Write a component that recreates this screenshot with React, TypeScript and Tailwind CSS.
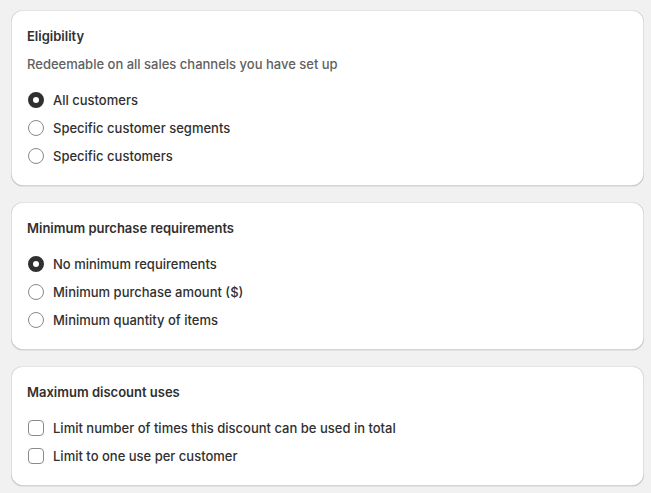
import React from "react";

function Radio({ checked, label }: { checked?: boolean; label: string }) {
  return (
    <div className="flex h-5 items-center gap-[9px]">
      <span
        className={
          checked
            ? "ml-px box-border h-4 w-4 rounded-full border-[5px] border-[#303030] bg-white"
            : "ml-px box-border h-4 w-4 rounded-full border border-[#8a8a8a] bg-white"
        }
      />
      <span className="text-[13px] font-[450] leading-5 text-[#303030]">{label}</span>
    </div>
  );
}

function Check({ label }: { label: string }) {
  return (
    <div className="flex h-5 items-center gap-[9px]">
      <span className="ml-px box-border h-4 w-4 rounded-[4px] border border-[#8a8a8a] bg-white" />
      <span className="text-[13px] font-[450] leading-5 text-[#303030]">{label}</span>
    </div>
  );
}

function Card({ children }: { children: React.ReactNode }) {
  return (
    <div className="rounded-xl bg-white px-4 pb-5 pt-4 shadow-[0_1px_0_0_rgba(26,26,26,0.07),0_1px_0_0_rgba(204,204,204,0.5)_inset,0_-1px_0_0_rgba(0,0,0,0.17)_inset,-1px_0_0_0_rgba(0,0,0,0.13)_inset,1px_0_0_0_rgba(0,0,0,0.13)_inset]">
      {children}
    </div>
  );
}

export default function App() {
  return (
    <div
      className="min-h-[493px] bg-[#f1f1f1] pb-2 pl-[11px] pr-[7px] pt-[10px]"
      style={{ fontFamily: "Inter, 'Noto Sans', sans-serif" }}
    >
      <div className="flex flex-col gap-4">
        <Card>
          <h2 className="text-[13px] font-semibold leading-5 text-[#303030]">Eligibility</h2>
          <p className="mt-2 text-[13px] font-[450] leading-5 text-[#616161]">
            Redeemable on all sales channels you have set up
          </p>
          <div className="mt-4 flex flex-col gap-2">
            <Radio checked label="All customers" />
            <Radio label="Specific customer segments" />
            <Radio label="Specific customers" />
          </div>
        </Card>
        <Card>
          <h2 className="text-[13px] font-semibold leading-5 text-[#303030]">
            Minimum purchase requirements
          </h2>
          <div className="mt-4 flex flex-col gap-2">
            <Radio checked label="No minimum requirements" />
            <Radio label="Minimum purchase amount ($)" />
            <Radio label="Minimum quantity of items" />
          </div>
        </Card>
        <Card>
          <h2 className="text-[13px] font-semibold leading-5 text-[#303030]">
            Maximum discount uses
          </h2>
          <div className="mt-4 flex flex-col gap-2">
            <Check label="Limit number of times this discount can be used in total" />
            <Check label="Limit to one use per customer" />
          </div>
        </Card>
      </div>
    </div>
  );
}
